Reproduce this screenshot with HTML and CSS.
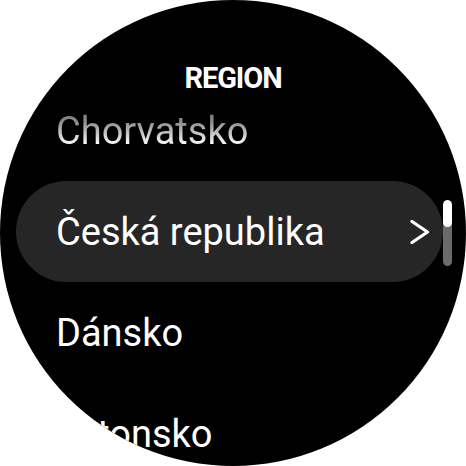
FILE: index.html
```html
<!DOCTYPE html>
<html>
<head>
<meta charset="utf-8">
<link rel="stylesheet" href="styles.css">
</head>
<body>
<div class="watch">
  <div class="header"><span class="title">REGION</span></div>
  <div class="list">
    <div class="row faded"><span class="label">Chorvatsko</span></div>
    <div class="row selected">
      <span class="label">Česká republika</span>
      <svg class="chev" width="20" height="24" viewBox="0 0 20 24"><path d="M2 1.5 L17.5 12 L2 22.5" fill="none" stroke="#fff" stroke-width="3.2" stroke-linecap="round" stroke-linejoin="round"/></svg>
    </div>
    <div class="row"><span class="label">Dánsko</span></div>
    <div class="row"><span class="label">Estonsko</span></div>
  </div>
  <div class="scrollbar"><div class="thumb"></div></div>
</div>
</body>
</html>
```
FILE: styles.css
```css
html, body {
  margin: 0;
  padding: 0;
  background: #fff;
}
.watch {
  position: relative;
  width: 466px;
  height: 466px;
  border-radius: 50%;
  background: #000;
  overflow: hidden;
  font-family: Roboto, "Noto Sans", sans-serif;
  color: #fff;
}
.header {
  display: flex;
  justify-content: center;
  padding-top: 63px;
  margin-bottom: -13px;
}
.title {
  font-size: 29px;
  line-height: 30px;
  font-weight: 700;
  letter-spacing: -1.1px;
}
.list {
  display: flex;
  flex-direction: column;
}
.row {
  height: 101px;
  display: flex;
  align-items: center;
  padding-left: 56px;
  box-sizing: border-box;
}
.label {
  font-size: 38px;
  line-height: 44px;
  white-space: nowrap;
  padding-top: 1px;
}
.faded .label {
  background: linear-gradient(to bottom, #777 0%, #8a8a8a 30%, #fafafa 80%, #fff 100%);
  -webkit-background-clip: text;
  background-clip: text;
  color: transparent;
}
.selected {
  margin: 0 23px 0 16px;
  padding-left: 40px;
  padding-right: 13px;
  border-radius: 51px;
  background: #262626;
  justify-content: space-between;
}
.chev {
  display: block;
}
.scrollbar {
  position: absolute;
  left: 443px;
  top: 200px;
  width: 9px;
  height: 66px;
  border-radius: 5px;
  background: #6b6b6b;
  overflow: hidden;
}
.thumb {
  height: 27px;
  border-radius: 5px;
  background: #fff;
}
```
